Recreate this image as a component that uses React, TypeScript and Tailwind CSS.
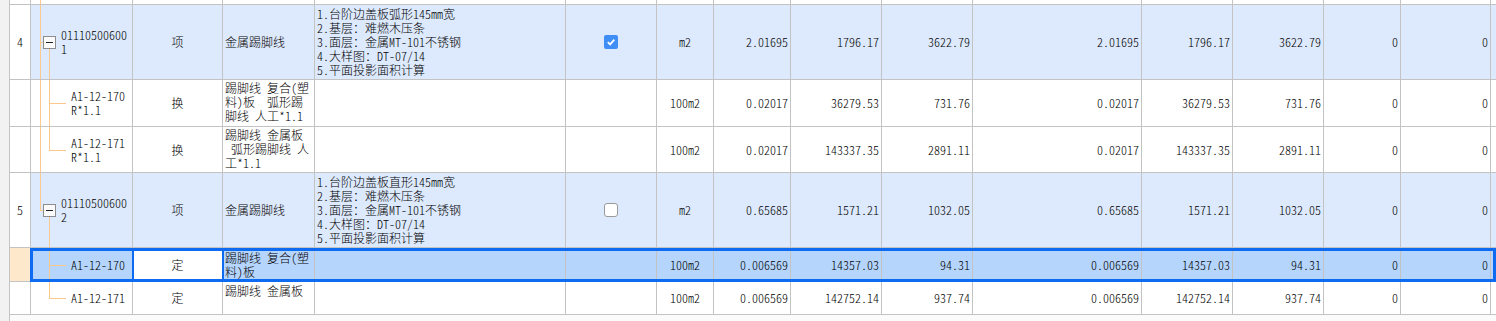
import React from "react";

// 清单/定额表格（两条清单项及其子目）

type Tree = {
  v1?: "full" | "half";
  box?: boolean;
  v2?: "full" | "half" | "box";
  h2?: boolean;
};

type RowData = {
  h: string;
  kind: "parent" | "child" | "sel";
  num?: string;
  code: string[];
  type: string;
  name: string[];
  namePad?: string;
  desc?: string[];
  check?: boolean;
  unit: string;
  vals: string[];
  tree: Tree;
};

const valWidths = [
  "w-[77px]",
  "w-[91px]",
  "w-[91px]",
  "w-[169px]",
  "w-[91px]",
  "w-[91px]",
  "w-[77px]",
  "w-[90px]",
];

const rows: RowData[] = [
  {
    h: "h-[75px]",
    kind: "parent",
    num: "4",
    code: ["01110500600", "1"],
    type: "项",
    name: ["金属踢脚线"],
    desc: [
      "1.台阶边盖板弧形145mm宽",
      "2.基层：难燃木压条",
      "3.面层：金属MT-101不锈钢",
      "4.大样图：DT-07/14",
      "5.平面投影面积计算",
    ],
    check: true,
    unit: "m2",
    vals: ["2.01695", "1796.17", "3622.79", "2.01695", "1796.17", "3622.79", "0", "0"],
    tree: { v1: "full", box: true, v2: "box" },
  },
  {
    h: "h-[47px]",
    kind: "child",
    code: ["A1-12-170", "R*1.1"],
    type: "换",
    name: ["踢脚线 复合(塑", "料)板  弧形踢", "脚线 人工*1.1"],
    namePad: "pt-[1px]",
    unit: "100m2",
    vals: ["0.02017", "36279.53", "731.76", "0.02017", "36279.53", "731.76", "0", "0"],
    tree: { v1: "full", v2: "full", h2: true },
  },
  {
    h: "h-[46px]",
    kind: "child",
    code: ["A1-12-171", "R*1.1"],
    type: "换",
    name: ["踢脚线 金属板", " 弧形踢脚线 人", "工*1.1"],
    namePad: "pt-[1px]",
    unit: "100m2",
    vals: ["0.02017", "143337.35", "2891.11", "0.02017", "143337.35", "2891.11", "0", "0"],
    tree: { v1: "full", v2: "half", h2: true },
  },
  {
    h: "h-[75px]",
    kind: "parent",
    num: "5",
    code: ["01110500600", "2"],
    type: "项",
    name: ["金属踢脚线"],
    desc: [
      "1.台阶边盖板直形145mm宽",
      "2.基层：难燃木压条",
      "3.面层：金属MT-101不锈钢",
      "4.大样图：DT-07/14",
      "5.平面投影面积计算",
    ],
    check: false,
    unit: "m2",
    vals: ["0.65685", "1571.21", "1032.05", "0.65685", "1571.21", "1032.05", "0", "0"],
    tree: { v1: "half", box: true, v2: "box" },
  },
  {
    h: "h-[34px]",
    kind: "sel",
    code: ["A1-12-170"],
    type: "定",
    name: ["踢脚线 复合(塑", "料)板"],
    namePad: "pt-[3px]",
    unit: "100m2",
    vals: ["0.006569", "14357.03", "94.31", "0.006569", "14357.03", "94.31", "0", "0"],
    tree: { v2: "full", h2: true },
  },
  {
    h: "h-[33px]",
    kind: "child",
    code: ["A1-12-171"],
    type: "定",
    name: ["踢脚线 金属板"],
    namePad: "pt-[2px]",
    unit: "100m2",
    vals: ["0.006569", "142752.14", "937.74", "0.006569", "142752.14", "937.74", "0", "0"],
    tree: { v2: "half", h2: true },
  },
];

const cell = "shrink-0 border-r border-b border-[#c3c3c3] relative overflow-hidden";

function TreeLines({ tree }: { tree: Tree }) {
  return (
    <>
      {tree.v1 === "full" && <div className="absolute left-[9px] top-0 bottom-0 w-px bg-[#fcc98c]" />}
      {tree.v1 === "half" && <div className="absolute left-[9px] top-0 h-1/2 w-px bg-[#fcc98c]" />}
      {tree.box && (
        <>
          <div className="absolute left-[9px] top-1/2 w-[3px] h-px bg-[#fcc98c]" />
          <div className="absolute left-[12px] top-[calc(50%-6px)] w-[13px] h-[13px] border border-[#8d8d8d] bg-[#fafafa] flex items-center justify-center">
            <div className="w-[7px] h-px bg-[#222]" />
          </div>
        </>
      )}
      {tree.v2 === "box" && <div className="absolute left-[18px] top-[calc(50%+7px)] bottom-0 w-px bg-[#fcc98c]" />}
      {tree.v2 === "full" && <div className="absolute left-[18px] top-0 bottom-0 w-px bg-[#fcc98c]" />}
      {tree.v2 === "half" && <div className="absolute left-[18px] top-0 h-1/2 w-px bg-[#fcc98c]" />}
      {tree.h2 && <div className="absolute left-[18px] top-1/2 w-[17px] h-px bg-[#fcc98c]" />}
    </>
  );
}

function CheckBox({ checked }: { checked: boolean }) {
  if (checked) {
    return (
      <div className="w-[14px] h-[14px] rounded-[2px] bg-[#3f8ef5] flex items-center justify-center">
        <svg width="10" height="10" viewBox="0 0 10 10">
          <path d="M1.8 5.2 L4.1 7.4 L8.3 2.6" fill="none" stroke="#fff" strokeWidth="1.7" />
        </svg>
      </div>
    );
  }
  return <div className="w-[14px] h-[14px] rounded-[3px] border border-[#9a9a9a] bg-white" />;
}

function Row({ r }: { r: RowData }) {
  const bg = r.kind === "parent" ? "bg-[#dde9fc]" : r.kind === "sel" ? "bg-[#b5d5fd]" : "bg-white";
  const numBg = r.kind === "sel" ? "bg-[#fee8cc]" : "bg-white";
  const typeBg = r.kind === "sel" ? "bg-white" : "";
  return (
    <div className={`relative flex ${r.h}`}>
      <div className="w-[10px] shrink-0 bg-[#f2f2f2] border-r border-[#c3c3c3]" />
      <div className={`${cell} w-[21px] ${numBg} flex items-center justify-center`}>{r.num}</div>
      <div className={`${cell} w-[102px] ${bg} flex items-center`}>
        <TreeLines tree={r.tree} />
        <div className={`${r.kind === "parent" ? "pl-[30px]" : "pl-[40px]"} whitespace-pre`}>
          {r.code.map((c, i) => (
            <div key={i}>{c}</div>
          ))}
        </div>
      </div>
      <div className={`${cell} w-[90px] ${bg} ${typeBg} flex items-center justify-center`}>{r.type}</div>
      <div className={`${cell} w-[92px] ${bg} flex pl-[2px] whitespace-pre ${r.kind === "parent" ? "items-center" : "items-start " + r.namePad}`}>
        <div>
          {r.name.map((n, i) => (
            <div key={i}>{n}</div>
          ))}
        </div>
      </div>
      <div className={`${cell} w-[251px] ${bg} flex items-center pl-[2px] whitespace-pre`}>
        <div>
          {r.desc?.map((d, i) => (
            <div key={i}>{d}</div>
          ))}
        </div>
      </div>
      <div className={`${cell} w-[91px] ${bg} flex items-center justify-center`}>
        {r.check !== undefined && <CheckBox checked={r.check} />}
      </div>
      <div className={`${cell} w-[57px] ${bg} flex items-center justify-center`}>{r.unit}</div>
      {r.vals.map((v, i) => (
        <div key={i} className={`${cell} ${valWidths[i]} ${bg} flex items-center justify-end pr-[2px]`}>
          {v}
        </div>
      ))}
      <div className={`flex-1 border-b border-[#c3c3c3] ${bg}`} />

      {r.kind === "sel" && (
        <>
          <div className="absolute left-[30px] right-0 top-0 bottom-0 border-[3px] border-[#0d6bf2] pointer-events-none" />
          <div className="absolute left-[132px] w-[92px] top-0 bottom-0 border-x-2 border-[#0d6bf2] pointer-events-none" />
        </>
      )}
    </div>
  );
}

export default function App() {
  return (
    <div className="w-[1496px] h-[321px] overflow-hidden bg-white text-black text-[12px] leading-[14px] font-light [font-feature-settings:'hwid'] font-['Noto_Sans_CJK_SC','Liberation_Sans',sans-serif]">
      {/* 上一行的尾部 */}
      <div className="flex h-[5px]">
        <div className="w-[10px] shrink-0 bg-[#f2f2f2] border-r border-[#c3c3c3]" />
        <div className={`${cell} w-[21px] bg-white`} />
        <div className={`${cell} w-[102px] bg-white`}>
          <TreeLines tree={{ v1: "full" }} />
        </div>
        <div className={`${cell} w-[90px]`} />
        <div className={`${cell} w-[92px]`} />
        <div className={`${cell} w-[251px]`} />
        <div className={`${cell} w-[91px]`} />
        <div className={`${cell} w-[57px]`} />
        {valWidths.map((w, i) => (
          <div key={i} className={`${cell} ${w}`} />
        ))}
        <div className="flex-1 border-b border-[#c3c3c3]" />
      </div>

      {rows.map((r, i) => (
        <Row key={i} r={r} />
      ))}

      <div className="flex h-[10px]">
        <div className="w-[10px] shrink-0 bg-[#f2f2f2] border-r border-[#c3c3c3]" />
        <div className="flex-1 bg-[#fbfbfb]" />
      </div>
    </div>
  );
}
